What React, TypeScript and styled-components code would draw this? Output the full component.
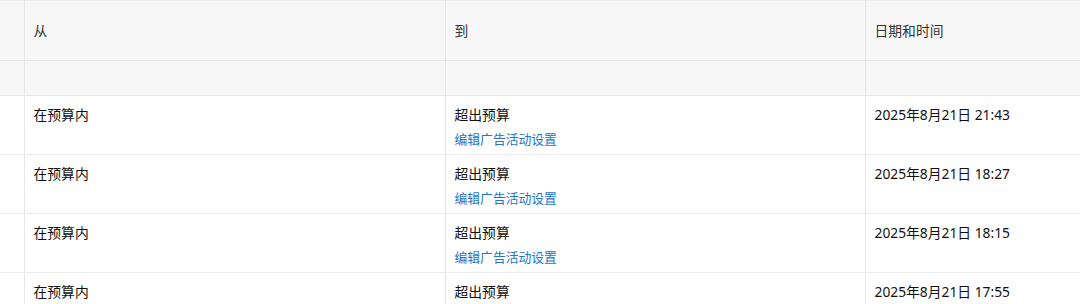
import styled, { createGlobalStyle } from "styled-components";

const GlobalStyle = createGlobalStyle`
  html, body {
    margin: 0;
    padding: 0;
    background: #ffffff;
  }
  body {
    font-family: "Noto Sans", "Noto Sans CJK SC", sans-serif;
    color: #0f1111;
    overflow: hidden;
  }
`;

const rows = [
  { from: "在预算内", to: "超出预算", date: "2025年8月21日 21:43" },
  { from: "在预算内", to: "超出预算", date: "2025年8月21日 18:27" },
  { from: "在预算内", to: "超出预算", date: "2025年8月21日 18:15" },
  { from: "在预算内", to: "超出预算", date: "2025年8月21日 17:55" },
];

const App = () => {
  return (
    <>
      <GlobalStyle />
      <Table>
        <colgroup>
          <Col $w={24} />
          <Col $w={421} />
          <Col $w={420} />
          <col />
        </colgroup>
        <thead>
          <HeadRow>
            <HeadCell />
            <HeadCell>从</HeadCell>
            <HeadCell>到</HeadCell>
            <HeadCell>日期和时间</HeadCell>
          </HeadRow>
          <FilterRow>
            <HeadCell />
            <HeadCell />
            <HeadCell />
            <HeadCell />
          </FilterRow>
        </thead>
        <tbody>
          {rows.map((r, i) => (
            <BodyRow key={i}>
              <Cell />
              <Cell>{r.from}</Cell>
              <Cell>
                <div>{r.to}</div>
                <EditLink href="#">编辑广告活动设置</EditLink>
              </Cell>
              <Cell>{r.date}</Cell>
            </BodyRow>
          ))}
        </tbody>
      </Table>
    </>
  );
};

const Table = styled.table`
  width: 1080px;
  border-collapse: collapse;
  table-layout: fixed;
  font-size: 13.8px;
  line-height: 20px;
  border-top: 1px solid #ececec;
`;

const Col = styled.col<{ $w: number }>`
  width: ${(p) => p.$w}px;
`;

const HeadRow = styled.tr`
  height: 60px;
  background: #f6f6f6;
`;

const FilterRow = styled.tr`
  height: 35px;
  background: #f6f6f6;
`;

const HeadCell = styled.th`
  text-align: left;
  font-weight: 400;
  color: #333333;
  padding: 0 0 0 9px;
  border-bottom: 1px solid #e7e7e7;
  border-left: 1px solid #e7e7e7;
  &:first-child {
    border-left: none;
  }
`;

const BodyRow = styled.tr`
  height: 59px;
`;

const Cell = styled.td`
  vertical-align: top;
  padding: 9px 0 0 9px;
  color: #111111;
  border-bottom: 1px solid #ececec;
  border-left: 1px solid #e7e7e7;
  &:first-child {
    border-left: none;
  }
`;

const EditLink = styled.a`
  display: block;
  margin-top: 4px;
  font-size: 12.8px;
  color: #2474c8;
  text-decoration: none;
`;

export default App;
